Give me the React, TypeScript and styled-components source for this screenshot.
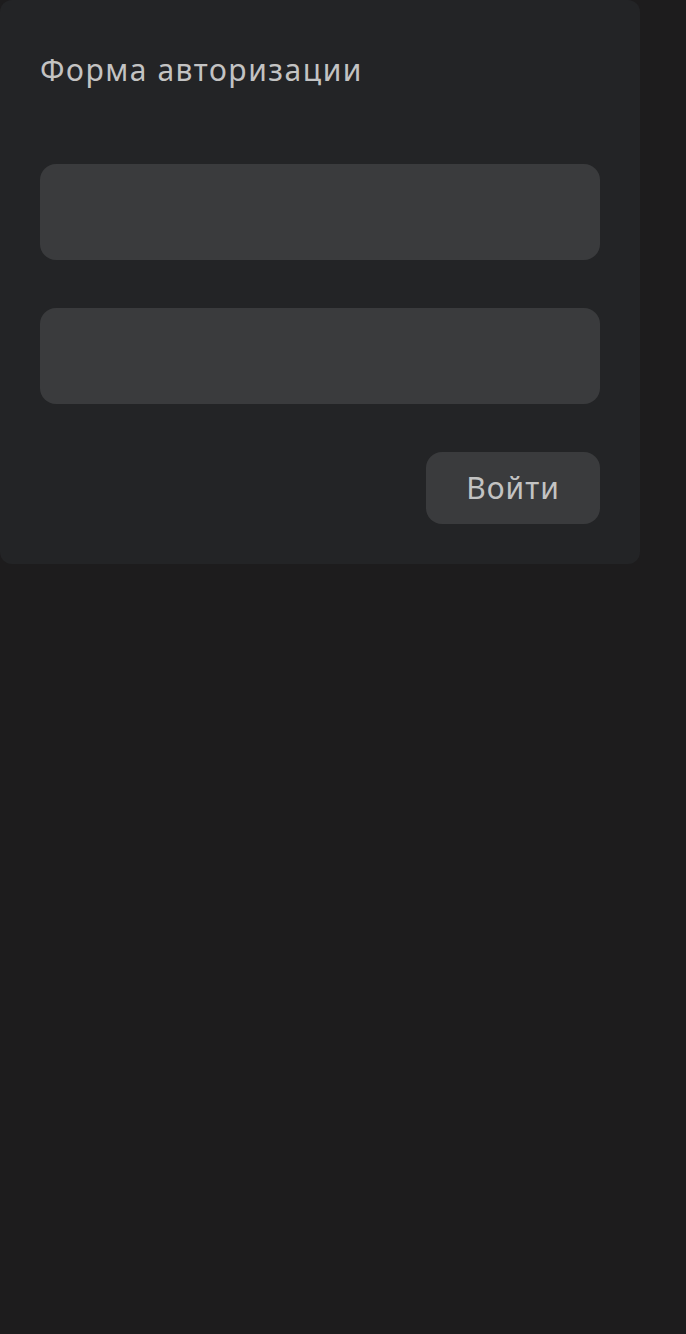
import React from "react";
import styled, { createGlobalStyle } from "styled-components";

const Global = createGlobalStyle`
  html, body { margin: 0; padding: 0; background: #1d1c1d; }
  body { font-family: "Noto Sans", "Open Sans", sans-serif; }
  * { box-sizing: border-box; }
`;

const Page = styled.div`
  width: 686px;
  min-height: 1334px;
  background: #1d1c1d;
`;

const Card = styled.form`
  width: 640px;
  background: #232426;
  border-radius: 12px;
  padding: 40px;
  display: flex;
  flex-direction: column;
`;

const Title = styled.h1`
  margin: 0 0 64px;
  font-size: 30px;
  line-height: 60px;
  font-weight: 400;
  color: #c3c3c3;
  letter-spacing: 1.55px;
`;

const Field = styled.input`
  width: 560px;
  height: 96px;
  border: none;
  outline: none;
  border-radius: 16px;
  background: #3a3b3d;
  color: #c3c3c3;
  font-size: 28px;
  padding: 0 24px;
  margin-bottom: 48px;
  font-family: inherit;
`;

const Actions = styled.div`
  display: flex;
  justify-content: flex-end;
`;

const Button = styled.button`
  width: 174px;
  height: 72px;
  border: none;
  border-radius: 16px;
  background: #3a3b3d;
  color: #c3c3c3;
  font-family: inherit;
  font-size: 30px;
  line-height: 72px;
  letter-spacing: 1px;
  padding: 0;
  cursor: pointer;
`;

export default function App() {
  return (
    <Page>
      <Global />
      <Card onSubmit={(e) => e.preventDefault()}>
        <Title>Форма авторизации</Title>
        <Field type="text" />
        <Field type="password" />
        <Actions>
          <Button type="submit">Войти</Button>
        </Actions>
      </Card>
    </Page>
  );
}
